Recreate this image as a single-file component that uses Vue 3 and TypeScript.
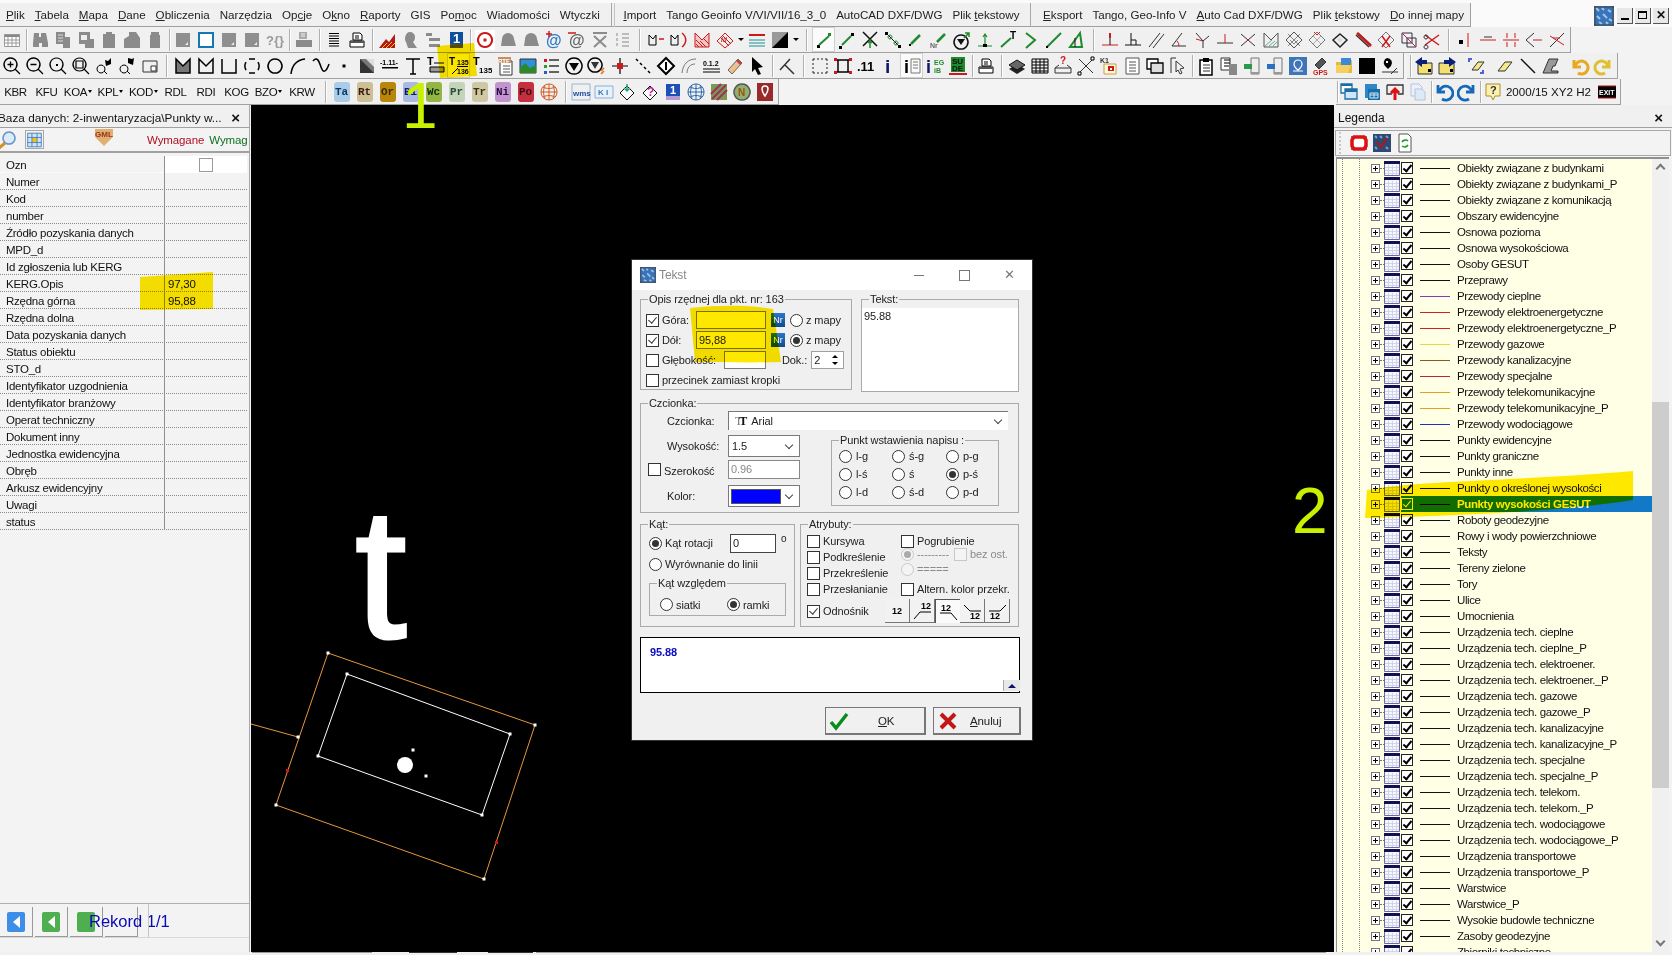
<template>
  <div class="app">
    <div class="menubar">
      <div class="menu">
        <span v-for="m in menuA" :key="m" class="mi">{{ split(m)[0] }}<u>{{ split(m)[1] }}</u>{{ split(m)[2] }}</span>
        <i class="msep"></i>
        <span v-for="m in menuB" :key="m" class="mi">{{ split(m)[0] }}<u>{{ split(m)[1] }}</u>{{ split(m)[2] }}</span>
        <i class="msep short"></i>
        <span v-for="m in menuC" :key="m + 'c'" class="mi">{{ split(m)[0] }}<u>{{ split(m)[1] }}</u>{{ split(m)[2] }}</span>
      </div>
      <div class="winctl">
        <Ico name="mosaic" class="winicon" />
        <span class="wbtn"><i class="w-min"></i></span>
        <span class="wbtn"><i class="w-max"></i></span>
        <span class="wbtn x">✕</span>
      </div>
    </div>

    <div class="tbrow">
      <div class="tb">
        <template v-for="(tok, i) in row2" :key="i">
          <i v-if="isGap(tok)" :class="tok[0] === '_' ? 'gap' : 'sep'" :style="{ width: gapW(tok) + 'px' }"></i>
          <i v-else-if="tok === 'dd'" class="dd"></i>
          <span v-else class="btn" :class="{ pressed: tok.endsWith('!') }"><Ico :name="tok.replace('!', '')" /></span>
        </template>
      </div>
    </div>

    <div class="tbrow">
      <div class="tb">
        <template v-for="(tok, i) in row3a" :key="i">
          <i v-if="isGap(tok)" :class="tok[0] === '_' ? 'gap' : 'sep'" :style="{ width: gapW(tok) + 'px' }"></i>
          <span v-else class="btn" :class="{ pressed: tok.endsWith('!') }"><Ico :name="tok.replace('!', '')" /></span>
        </template>
      </div>
      <div class="tb second">
        <template v-for="(tok, i) in row3b" :key="i">
          <i v-if="isGap(tok)" :class="tok[0] === '_' ? 'gap' : 'sep'" :style="{ width: gapW(tok) + 'px' }"></i>
          <span v-else class="btn"><Ico :name="tok" /></span>
        </template>
      </div>
    </div>

    <div class="tbrow">
      <div class="tb">
        <span v-for="k in keys" :key="k.t" class="key" :style="{ width: k.w + 'px' }">{{ k.t }}<i v-if="k.dd" class="kdd"></i></span>
        <i class="sep" style="width: 11px"></i>
        <span v-for="g in tags" :key="g.t" class="btn"><b class="tag" :style="{ background: g.bg, color: g.fg }">{{ g.t }}</b></span>
        <span class="btn"><Ico name="globeo" /></span>
        <i class="sep" style="width: 9px"></i>
        <span v-for="n in row4a" :key="n" class="btn"><Ico :name="n" /></span>
      </div>
      <div class="tb right4">
        <i class="sep" style="width: 2px"></i>
        <span v-for="n in ['wins', 'winsb', 'upbox', 'copyg']" :key="n" class="btn"><Ico :name="n" /></span>
        <i class="sep" style="width: 3px"></i>
        <span class="btn"><Ico name="undob" /></span>
        <span class="btn"><Ico name="redob" /></span>
        <i class="sep" style="width: 3px"></i>
        <span class="btn"><Ico name="help" /></span>
        <span class="coord">2000/15 XY2 H2</span>
        <span class="btn"><Ico name="exit" /></span>
      </div>
    </div>

    <div class="main">
      <aside class="left">
        <div class="ptitle"><span class="ptext cut">Baza danych: 2-inwentaryzacja\Punkty w...</span><b class="pclose">×</b></div>
        <div class="ltools">
          <Ico name="mag" class="lmag" />
          <span class="gridbtn"><Ico name="gridy" /></span>
          <Ico name="gml" class="lgml" />
          <span class="req red">Wymagane</span>
          <span class="req green">Wymag.</span>
        </div>
        <div class="attrs">
          <div v-for="(r, i) in attrs" :key="r.k" class="arow" :class="{ first: i === 0 }">
            <span class="akey">{{ r.k }}</span>
            <span class="aval"><i v-if="i === 0" class="acheck"></i>{{ r.v }}</span>
          </div>
        </div>
        <div class="recbar">
          <span class="navbtn"><i class="nav blue"><b class="tri-l"></b></i></span>
          <span class="navbtn"><i class="nav grn"><b class="tri-l"></b></i></span>
          <span class="navbtn"><i class="nav grn"></i></span>
          <span class="navbtn last"></span>
          <span class="rec">Rekord 1/1</span>
          <i class="recline"></i>
        </div>
      </aside>

      <section class="canvas">
        <svg class="map" viewBox="251 105 1083 847" width="1083" height="847">
          <text x="355" y="638" class="bigt">t</text>
          <g fill="none" stroke="#e8963c">
            <path d="M251 724L298 737M328 653L535 725L484 879L276 805Z" />
          </g>
          <path d="M347 674L510 734L482 815L318 756Z" fill="none" stroke="#fff" />
          <g fill="#fff">
            <rect v-for="n in nodes" :key="n[0] + '-' + n[1]" :x="n[0] - 1.5" :y="n[1] - 1.5" width="3" height="3" />
            <circle cx="405" cy="765" r="8" />
          </g>
          <g fill="#e01010">
            <rect x="286" y="769" width="3" height="3" />
            <rect x="495" y="841" width="3" height="3" />
          </g>
        </svg>

        <div class="dialog">
          <div class="dtitle">
            <Ico name="mosaic" class="dicon" />
            <span class="dname">Tekst</span>
            <i class="d-min"></i><i class="d-max"></i><span class="d-x">✕</span>
          </div>
          <div class="dbody">
            <div class="dr-top">
              <div class="grp g-opis">
                <span class="cap">Opis rzędnej dla pkt. nr: 163</span>
                <div class="orow">
                  <i class="cb on"></i><span class="olabel">Góra:</span><i class="inp w70"></i><b class="nr">Nr</b><i class="rb"></i><span class="zm">z mapy</span>
                </div>
                <div class="orow">
                  <i class="cb on"></i><span class="olabel">Dół:</span><span class="inp w70">95,88</span><b class="nr">Nr</b><i class="rb on"></i><span class="zm">z mapy</span>
                </div>
                <div class="orow">
                  <i class="cb"></i><span class="olabel wide">Głębokość:</span><i class="inp w42"></i><span class="dok">Dok.:</span>
                  <span class="spin">2<i class="arrows"><b class="sp-up"></b><b class="sp-down"></b></i></span>
                </div>
                <div class="orow">
                  <i class="cb"></i><span class="olabel free">przecinek zamiast kropki</span>
                </div>
              </div>
              <div class="grp g-tekst">
                <span class="cap">Tekst:</span>
                <div class="tekst-val">95.88</div>
              </div>
            </div>

            <div class="grp g-font">
              <span class="cap">Czcionka:</span>
              <div class="frow">
                <span class="flabel">Czcionka:</span>
                <span class="combo full"><span class="ttf">T<b>T</b></span>Arial<i class="chev"></i></span>
              </div>
              <div class="fsplit">
                <div class="fleft">
                  <div class="fline h1">
                    <span class="flabel">Wysokość:</span>
                    <span class="combo sm">1.5<i class="chev"></i></span>
                  </div>
                  <div class="fline h2">
                    <i class="cb szer"></i><span class="flabel short">Szerokość</span>
                    <span class="inp gray w72">0.96</span>
                  </div>
                  <div class="fline h3">
                    <span class="flabel">Kolor:</span>
                    <span class="combo sm kol"><i class="swatch"></i><i class="chev"></i></span>
                  </div>
                </div>
                <div class="grp g-punkt">
                  <span class="cap">Punkt wstawienia napisu :</span>
                  <div class="pgrid">
                    <span v-for="p in points" :key="p" class="pcell"><i class="rb" :class="{ on: p === 'p-ś' }"></i>{{ p }}</span>
                  </div>
                </div>
              </div>
            </div>

            <div class="dr-mid">
              <div class="grp g-kat">
                <span class="cap">Kąt:</span>
                <div class="krow r1"><i class="rb on"></i><span class="klabel">Kąt rotacji</span><i class="inp kinp">0</i><span class="deg">o</span></div>
                <div class="krow r2"><i class="rb"></i><span>Wyrównanie do linii</span></div>
                <div class="grp g-wzgl">
                  <span class="cap">Kąt względem</span>
                  <div class="wrow">
                    <i class="rb"></i><span class="w1">siatki</span><i class="rb on"></i><span>ramki</span>
                  </div>
                </div>
              </div>
              <div class="grp g-atr">
                <span class="cap">Atrybuty:</span>
                <div class="acols">
                  <div class="acol c1">
                    <span class="aitem"><i class="cb"></i>Kursywa</span>
                    <span class="aitem"><i class="cb"></i>Podkreślenie</span>
                    <span class="aitem"><i class="cb"></i>Przekreślenie</span>
                    <span class="aitem"><i class="cb"></i>Przesłanianie</span>
                  </div>
                  <div class="acol c2">
                    <span class="bitem t1"><i class="cb"></i>Pogrubienie</span>
                    <span class="bitem t2 dis"><i class="rb on"></i>---------<i class="cb bez"></i>bez ost.</span>
                    <span class="bitem t3 dis"><i class="rb"></i>=====</span>
                    <span class="bitem t4"><i class="cb"></i>Altern. kolor przekr.</span>
                  </div>
                </div>
                <div class="odn">
                  <span class="aitem"><i class="cb on"></i>Odnośnik</span>
                  <div class="lbtns">
                    <span v-for="(l, i) in leaders" :key="l" class="lbtn" :class="{ sunk: i === 2 }"><Ico :name="l" /></span>
                  </div>
                </div>
              </div>
            </div>

            <div class="preview">
              <b>95.88</b>
              <span class="pvbtn"><i></i></span>
            </div>

            <div class="dbtns">
              <span class="dbtn ok"><Ico name="okcheck" class="bico" /><span class="btxt"><u>O</u>K</span></span>
              <span class="dbtn no"><Ico name="nox" class="bico" /><span class="btxt"><u>A</u>nuluj</span></span>
            </div>
          </div>
        </div>
      </section>

      <aside class="right">
        <div class="ptitle"><span class="ptext">Legenda</span><b class="pclose">×</b></div>
        <div class="rtools">
          <i class="rgrip"></i>
          <Ico name="ring" class="rico" />
          <Ico name="mosaicx" class="rico" />
          <Ico name="docsync" class="rico" />
        </div>
        <div class="rlist">
          <div class="tree">
            <div v-for="l in layers" :key="l.t" class="lrow">
              <i class="plus"></i>
              <i class="conn"></i>
              <Ico name="laytable" class="lt" />
              <div class="lmain" :class="{ sel: l.sel }">
                <i class="lcb"></i>
                <i class="lline" :style="{ background: l.c }"></i>
                <span class="ltext">{{ l.t }}</span>
              </div>
            </div>
          </div>
          <div class="scroll">
            <i class="sc up"></i>
            <div class="track"><i class="thumb"></i></div>
            <i class="sc down"></i>
          </div>
        </div>
      </aside>
    </div>

    <div class="statusbar">
      <i class="st s1"></i><i class="st s2"></i><i class="st s3"></i><i class="st s4"></i>
    </div>

    <svg class="marker" viewBox="0 0 1672 955" width="1672" height="955">
      <g fill="#ffe800">
        <path d="M437 46L474 43L477 76L440 78Z" />
        <path d="M140 277L213 272L213 309L140 310Z" />
        <path d="M690 308C720 305 750 305 773 309L781 362C750 363 720 362 695 362Z" />
        <path d="M1367 490C1420 480 1520 481 1633 471L1633 500C1560 512 1440 516 1365 518Z" />
      </g>
    </svg>
    <span class="note n1">1</span>
    <span class="note n2">2</span>
  </div>
</template>

<script setup lang="ts">
import { h } from 'vue';

interface Shape {
  d?: string;
  stroke?: string;
  fill?: string;
  sw?: number;
  text?: string;
  x?: number;
  y?: number;
  size?: number;
}

const p = (d: string, stroke = '#000', fill = 'none', sw = 1): Shape => ({ d, stroke, fill, sw });
const f = (d: string, fill = '#000'): Shape => ({ d, fill, stroke: 'none' });
const t = (text: string, x: number, y: number, size: number, fill = '#000'): Shape => ({ text, x, y, size, fill });

const G = '#8b8b8b';
const GR = '#1f8a2e';
const R = '#cc1a1a';
const B = '#0f4f9c';

const icons: Record<string, Shape[]> = {
  tbl: [f('M2 4h16v13H2z', '#fff'), f('M2 4h16v3H2z', '#888'), p('M2.5 4.5h15v12h-15zM2.5 10h15M2.5 13h15M6 7v9M10 7v9M14 7v9', '#999')],
  gbin: [f('M4 3h5v4h2V3h5l2 10v4h-6v-4H9v4H3v-4z', G)],
  gdoc: [f('M3 2h9v5h5v11h-7v-4H3z', G), p('M5 5h5M5 8h5M5 11h5', '#ddd')],
  gdoc2: [f('M3 2h11v7h4v9H9v-4H3z', G), f('M5 5h6v5H5z', '#eee')],
  gdrum: [f('M7 2h6v2h3v14H4V4h3z', G)],
  gdrum2: [f('M7 2h7l4 6v10H2V9l5-3z', G)],
  gdrum3: [f('M6 2h8v3h1v13H5V5h1z', G)],
  gsq: [f('M3 3h14v14H3z', '#8f8f8f'), f('M12 15l3-3v3z', '#eee')],
  bsq: [p('M3 3h14v14H3z', '#1578b4', '#fff', 2)],
  qbr: [t('?{}', 1, 15, 13, '#999')],
  gprint: [f('M5 2h8v7H5z', '#aaa'), f('M2 10h16v7H2z', G), p('M7 4h4M7 6h4', '#eee')],
  list: [p('M5 3.5h10M5 6h10M5 8.5h10M5 11h10M5 13.5h10M5 16h10')],
  print: [p('M6 3h7l2 2v5H6z', '#000', '#fff'), p('M3 11h14v6H3zM8 6h4M8 8h4', '#000', '#fff'), f('M3 11h14v2H3z', '#555')],
  redchart: [f('M2 18L9 9l3 3 6-8v14z', '#b51818'), p('M9 18l6-6M13 18l5-5M5 18l5-5', '#f4c81e')],
  gperson: [f('M10 2a5 5 0 0 1 5 5c0 3-1 4-2 5l4 6H8l-2-6c-2-2-1-10 4-10z', G)],
  glist: [f('M3 3h6v3H3zM6 8h11v3H6zM6 14h11v3H6z', G)],
  blue1: [f('M4 2h13v12H4z', B), f('M4 14h13v4H4z', '#555'), t('1', 7, 13, 13, '#fff')],
  target: [f('M0 0h20v20H0z', '#fff'), p('M10 3a7 7 0 1 0 .01 0z', R, 'none', 2), f('M8.5 8.5h3v3h-3z', R)],
  gbell: [f('M10 3a6 6 0 0 1 6 6l2 7H3l1-7a6 6 0 0 1 6-6z', G)],
  atb: [t('@', 2, 16, 16, '#2d78c8'), p('M2 4h6M5 1v6', R, 'none', 1.5)],
  atg: [t('@', 2, 16, 16, '#666'), p('M1 3h8', R, 'none', 1.5)],
  gx: [p('M4 6l12 11M16 6L4 17M3 3h14', G, 'none', 2)],
  glist2: [p('M9 4h7M9 8h7M9 12h7M9 16h7M4 3v3M4 8v3M4 13v3', '#aaa', 'none', 1.5)],
  mdash: [p('M3 15V5l4 4 3-4v10z'), p('M13 9h5', R, 'none', 1.5)],
  marc: [p('M2 15V5l4 4 3-4v10z'), p('M13 3c5 4 5 10 0 14', R, 'none', 1.5)],
  mhatch: [p('M3 17V3l7 7 7-7v14z', R, '#f5c4c4'), p('M4 14l3 3M4 10l7 7M8 11l6 6M12 9l5 5', R)],
  hatchr: [p('M2 11l8-8 8 8-8 7z', R), p('M6 8l8 8M8 6l8 8', R), t('///', 6, 12, 7, '#c22')],
  lines: [f('M2 4h16v2H2z', R), p('M2 10h16M2 13h16', '#1a8f8f', 'none', 1), p('M2 16h16', '#1a8f8f', 'none', 1)],
  bw: [f('M2 2h16v16H2z', '#999'), f('M2 18L18 2v16z', '#000')],
  gl1: [f('M3 15h3v3H3z'), p('M5 15l10-9', GR, 'none', 2), f('M14 3h3v3h-3z', GR)],
  gl2: [f('M2 16h3v3H2zM14 3h3v3h-3z'), p('M5 15l9-9', GR, 'none', 2)],
  xg: [p('M3 2l14 14M17 2L3 16', '#111', 'none', 1.5), p('M10 18v-7M8 13l2-3 2 3', GR, 'none', 1.5)],
  nodes: [p('M3 3l14 14', '#111'), f('M2 2h3v3H2zM15 15h3v3h-3z'), p('M7 5a2 2 0 1 0 .01 0zM13 11a2 2 0 1 0 .01 0z', GR)],
  chk: [p('M5 14l9-9', GR, 'none', 2.5), f('M3 14h2v2H3z')],
  nrchk: [p('M8 12l8-8', GR, 'none', 2.5), t('Nr', 1, 18, 7, '#666')],
  vg: [p('M9 5a7 7 0 1 0 .01 0z', '#111', 'none', 1.5), f('M5 9h8l-4 6z', '#111'), p('M12 8l5-5M13 3h4v4', GR, 'none', 1.5)],
  tup: [p('M3 16h14M10 16V4M8 7l2-3 2 3', GR, 'none', 1.2), f('M8 14h4v3H8z')],
  tline: [p('M3 17l10-9', GR, 'none', 2), t('T', 12, 9, 10)],
  chev: [p('M5 3l9 7-9 8', GR, 'none', 2)],
  slash: [p('M3 17L17 3', GR, 'none', 2), f('M2 16h2v2H2z')],
  triang: [p('M3 17h12L13 3z', GR, 'none', 2), p('M8 17V8', '#111')],
  up1: [p('M2 15h16', R), p('M10 15V5', '#111'), f('M9 3h2v5H9z', R)],
  foot: [p('M2 15h16M8 15V3M8 10h5v5', '#111')],
  para: [p('M3 17L14 3M7 18L18 4', '#333')],
  ang: [p('M3 16h14M3 16L13 3', '#333'), p('M10 16a7 7 0 0 0-2-5', R)],
  yred: [p('M4 3l7 8v7M17 6l-6 5', '#333'), p('M4 9l7 2', R)],
  perp: [p('M2 13h16', '#333'), p('M10 4v9', R)],
  mm: [p('M3 4l14 12M3 16L17 4', '#333'), f('M9 9h2v2H9z', R)],
  box1: [p('M3 3l7 7 7-7v14H3z', '#555'), p('M4 16l7-6M8 16l6-5M12 16l4-4', '#6a9')],
  dia1: [p('M10 2l8 8-8 8-8-8z', '#555'), p('M4 4l12 12M16 4L4 16M6 10l4 4 4-4', '#888')],
  dia2: [p('M10 2l8 8-8 8-8-8z', '#777'), p('M6 6l8 8M14 6l-8 8', '#aaa'), p('M7 2l3 3 3-3', R)],
  dia3: [p('M10 4l7 6-7 7-7-7z', '#222', 'none', 1.5), f('M7 9l3-2 3 3-3 3-3-3z', '#ddd')],
  hatchbar: [p('M3 5l13 12M5 3l13 12', '#333', 'none', 1.5), p('M4 3l14 13', R, 'none', 2.5)],
  dia4: [p('M10 2l8 8-8 8-8-8z', '#777'), p('M6 6l8 11M14 6L6 17', R, 'none', 1.5)],
  sqline: [p('M3 3h10v10H3zM8 8h9v9H8z', '#333'), p('M3 3l14 14', '#c2187a')],
  scissors: [p('M3 5l14 10M3 15L17 5', R, 'none', 1.5), p('M4 5a2 2 0 1 0 .01 0zM4 15a2 2 0 1 0 .01 0z', '#333')],
  dotl: [f('M4 10h4v4H4z'), p('M13 3v14', R)],
  dash: [p('M2 10h16', R), p('M6 7h8', '#333')],
  cc: [p('M2 10h16M6 3v5M6 12v5M14 3v5M14 12v5', R)],
  arrowl: [p('M2 10l8-7M2 10l8 7', '#333'), p('M9 10h9', R)],
  xdash: [p('M3 17L17 3', '#333'), p('M3 6l14 9', R), p('M6 8h7', R)],

  zin: [p('M8.5 2a6.5 6.5 0 1 0 .01 0zM13 13l5 5M5.5 8.5h6M8.5 5.5v6', '#000', 'none', 1.3)],
  zout: [p('M8.5 2a6.5 6.5 0 1 0 .01 0zM13 13l5 5M5.5 8.5h6', '#000', 'none', 1.3)],
  zfit: [p('M8.5 2a6.5 6.5 0 1 0 .01 0zM13 13l5 5', '#000', 'none', 1.2), f('M8 8h2v2H8z')],
  zwin: [p('M8.5 2a6.5 6.5 0 1 0 .01 0zM13 13l5 5M5 5h7v7H5z', '#000', 'none', 1.2)],
  zleft: [p('M7 9a4 4 0 1 0 .01 0zM10 15l3 3', '#000'), f('M17 2l-3 3-3-1 1 6 5-2z')],
  zright: [p('M7 9a4 4 0 1 0 .01 0zM10 15l3 3', '#000'), f('M11 2l4 1 2-1-1 7-5-2z')],
  rectmin: [p('M3 5h14v11H3z', '#333'), p('M11 10h5v5h-5z', '#333', '#fff')],
  mfill: [p('M3 17V3l7 7 7-7v14z', '#000', '#777', 1.5)],
  m: [p('M3 17V3l7 7 7-7v14z', '#000', 'none', 1.5)],
  u: [p('M3 3v14h14V3', '#000', 'none', 1.5)],
  arcd: [p('M4 6a8 8 0 0 0 0 8M16 6a8 8 0 0 1 0 8M7 3h6M7 17h6', '#000', 'none', 1.5)],
  circle: [p('M10 3a7 7 0 1 0 .01 0z', '#000', 'none', 1.5)],
  arc: [p('M3 18C4 9 9 4 17 3', '#000', 'none', 1.5)],
  wave: [p('M2 5c4-5 6 0 8 6s5 6 8-3', '#000', 'none', 1.5)],
  dot: [f('M8.5 8.5h3v3h-3z')],
  grad: [f('M3 3h14v14H3z', '#777'), f('M3 3l14 14H3z', '#333'), f('M9 3h8v8z', '#ddd')],
  n111: [t('-1.11-', 0, 9, 7), f('M2 11h16v1.5H2z')],
  T: [p('M3 3h14M10 3v15M7 18h6', '#000', 'none', 1.5)],
  Tbox: [t('T', 1, 9, 11), p('M8 7h10', '#000'), p('M4 11h14v5H4z', '#000', '#999')],
  T135: [t('T', 0, 9, 10), t('135', 8, 9, 7), p('M3 18l6-6M8 10.5h11', '#000'), t('136', 8, 18, 7)],
  T135b: [t('T', 1, 9, 11), t('135', 7, 17, 8)],
  rtf: [p('M5 5h12v14H5z', '#333', '#fff'), f('M3 1h13v6H3z', '#c89060'), t('RTF', 3, 7, 6, '#fff'), p('M8 10h7M8 13h7M8 16h7', '#555')],
  img: [p('M2 3h16v14H2z', '#333', '#2e90d8'), f('M2 12l5-5 5 5 6-3v8H2z', '#2a8a2a')],
  bullets: [p('M8 4h10M8 10h10M8 16h10', '#333', 'none', 1.5), f('M3 3h3v3H3z', R), f('M3 9h3v3H3z', '#2a9a2a'), f('M3 15h3v3H3z', '#2060c0')],
  tric: [p('M10 2a8 8 0 1 0 .01 0z', '#000', 'none', 1.5), f('M5 7h10l-5 8z')],
  tric2: [p('M8 2a7 7 0 1 0 .01 0z', '#000', 'none', 1.5), f('M4 6h8l-4 7z', '#333'), p('M14 15l3-3M14 18l3-3', '#e07010', 'none', 1.5)],
  crossr: [p('M2 10h16M10 2v16', '#000', 'none', 1.2), f('M7 7h6v6H7z', R)],
  dotline: [p('M3 3l2 2M7 7l2 2M11 11l2 2M15 15l2 2', '#000', 'none', 1.5)],
  diamond: [p('M10 2l8 8-8 8-8-8z', '#000', '#fff', 2), p('M10 6v8', '#000', 'none', 2)],
  arcd2: [p('M3 17C4 8 9 3 17 3M8 17C8 12 11 8 16 8', '#777')],
  n012: [t('0.1.2', 1, 10, 7), p('M1 13h17M1 16h17', '#000')],
  pencil: [f('M3 14L13 3l4 4L7 18z', '#eec08a'), f('M11 5l4 4 2-2-4-4z', '#c84040'), p('M3 14L13 3l4 4L7 18z', '#666')],
  arrow: [f('M4 1l11 10-5 1 3 6-3 1-3-6-3 3z')],
  anglec: [p('M3 14L13 3M8 9l9 9', '#333', 'none', 1.5)],
  dashr: [p('M3 3h2M7 3h2M11 3h2M15 3h2M3 17h2M7 17h2M11 17h2M15 17h2M3 3v2M3 7v2M3 11v2M3 15v2M17 3v2M17 7v2M17 11v2M17 15v2', '#222')],
  redr: [p('M3 4h14M3 16h14M5 4v12M15 4v12', '#000', 'none', 1.5), f('M1 2h3v3H1zM16 2h3v3h-3zM1 15h3v3H1zM16 15h3v3h-3z', R)],
  n11: [t('.11', 1, 15, 13)],
  i: [t('i', 6, 17, 19, '#0a1a66')],
  ilist: [t('i', 2, 17, 18), p('M9 3h9v14H9zM11 6h5M11 9h5M11 12h5', '#777')],
  iegib: [t('i', 1, 17, 18, '#0a1a66'), t('EG', 9, 9, 7, GR), t('iB', 9, 17, 7, GR)],
  sude: [f('M3 1h14v15H3z', '#1f8a2e'), t('SU', 4, 8, 8, '#111'), t('DE', 4, 15, 8, '#111'), f('M1 17h18v2H1z', R)],
  layersg: [f('M2 13l8-5 8 5-8 5z', '#222'), f('M2 9l8-5 8 5-8 5z', '#666'), p('M2 9l8-5 8 5-8 5z', '#111')],
  table: [p('M2 3h16v14H2zM2 6h16M2 9h16M2 12h16M2 15h16M6 3v14M10 3v14M14 3v14', '#000')],
  qbox: [t('?', 7, 8, 10, R), p('M2 12h16v5H2zM2 12l4-3M18 12l-4-3', '#333')],
  xn: [p('M3 3l14 14M17 3L3 17', '#333'), p('M2 16h3v3H2zM15 1h3v3h-3z', '#000', '#fff')],
  k1: [t('K1', 1, 7, 7, '#333'), p('M5 8h12v10H5z', '#c8a040', '#fff9d8'), f('M9 10h6v5H9z', R), f('M11 12h2v2h-2z', '#fff')],
  doc: [p('M4 2h13v16H4zM7 6h7M7 9h7M7 12h7M7 15h7', '#555', '#fff')],
  windows: [p('M2 3h11v10H2z', '#000', '#fff', 1.3), p('M6 7h12v10H6z', '#000', '#ddd', 1.3)],
  cursor: [p('M3 2v15M3 2h5M8 5l8 7-4 1 2 4-2 1-2-4-2 2z', '#333', 'none', 1)],
  clip: [p('M4 4h12v15H4z', '#000', '#fff', 1.5), f('M7 2h6v4H7z'), p('M7 9h7M7 12h7M7 15h7', '#333')],
  docs: [p('M2 2h9v12H2z', '#333', '#fff'), p('M5 4h6M5 7h6M5 10h6', '#000'), f('M10 8h8v11h-8z', '#888')],
  usbg: [p('M9 2h8v16H9z', '#777', '#eee'), f('M2 8h8v5H2z', '#2a9a4a'), f('M9 16h8v2H9z', '#999')],
  usbb: [p('M9 2h8v16H9z', '#777', '#eee'), f('M2 8h8v5H2z', '#2a70c0'), f('M9 16h8v2H9z', '#999')],
  mappin: [f('M1 1h18v18H1z', '#3e74b8'), p('M10 4a4 4 0 0 1 4 4c0 3-4 6-4 6s-4-3-4-6a4 4 0 0 1 4-4zM5 15h10', '#fff', 'none', 1.2)],
  gps: [p('M4 9l7-7 4 4-7 7z', '#333', '#555'), t('GPS', 2, 19, 7, R)],
  folder: [f('M2 6h7l2-2h7v13H2z', '#e8b93a'), f('M7 2h10v7H7z', '#3a8ad8'), f('M2 9h15l-3 8H2z', '#f5d060')],
  black: [f('M2 2h16v16H2z')],
  mark: [f('M7 2a5 5 0 0 1 4 8l-3 3-3-3a5 5 0 0 1 2-8z'), p('M2 16h16M11 18l6-6', '#333'), f('M6 5h2v2H6z', '#fff')],
  sel1: [f('M4 7h14v11H4z', '#f3e070'), p('M4 7h14v11H4z', '#333'), f('M1 6l7-5v3h5v4H8v3z', '#0a1f7a'), f('M14 13h3v3h-3z')],
  sel2: [f('M2 7h15v11H2z', '#f3e070'), p('M2 7h15v11H2z', '#333'), f('M19 6l-7-5v3H7v4h5v3z', '#0a1f7a'), f('M13 13h3v3h-3z')],
  erasb: [f('M6 14L12 6h6l-6 8z', '#f3e98a'), p('M6 14L12 6h6l-6 8z', '#333'), f('M2 2h4v2H4v2H2zM18 18h-4v-2h2v-2h2z', '#5060d8')],
  eras: [f('M3 15L10 6h7l-7 9z', '#f3e98a'), p('M3 15L10 6h7l-7 9z', '#333')],
  bslash: [p('M3 3l14 14', '#111', 'none', 1.5)],
  zsh: [f('M8 3h9l-3 7h-2l-2 5h7v2H2z', '#999'), p('M8 3h9l-3 7h-2l-2 5h7v2H2z', '#333')],
  undoy: [p('M4 4v7h7M5 11a6.5 6.5 0 1 1 3 6', '#e8a820', 'none', 3)],
  redoy: [p('M16 4v7H9M15 11a6.5 6.5 0 1 0-3 6', '#e0c030', 'none', 3)],

  globeo: [p('M10 2a8 8 0 1 0 .01 0zM2 10h16M10 2v16M4 5c4 2 8 2 12 0M4 15c4-2 8-2 12 0M6 4c-2 4-2 8 0 12M14 4c2 4 2 8 0 12', '#d05a20')],
  wms: [p('M1 2h18v16H1z', '#9ab5d5'), t('wms', 2, 14, 8, '#2050a0')],
  ki: [p('M1 4h18v12H1z', '#8ab0d8', '#e8f2fb'), t('K I', 4, 13, 8, '#3a78c0')],
  dia5: [p('M10 4l7 7-7 7-7-7z', '#111', '#fff'), p('M10 2v7M7 6l3 3 3-3', '#2aa070', 'none', 1.5)],
  qdia: [p('M10 4l7 7-7 7-7-7z', '#111', '#fff'), t('?', 7, 14, 12, '#c02090')],
  b1: [f('M3 2h14v12H3z', '#1c50b8'), t('1', 7, 12, 11, '#fff'), f('M3 14h14v4H3z', '#b79ad0')],
  globeb: [p('M10 2a8 8 0 1 0 .01 0zM2 10h16M10 2v16M4 5c4 2 8 2 12 0M4 15c4-2 8-2 12 0M6 4c-2 4-2 8 0 12M14 4c2 4 2 8 0 12', '#2c68a8')],
  hmap: [f('M2 2h16v16H2z', '#7a9a50'), p('M3 17L17 3M8 18L18 8M2 12L12 2', '#a03060', 'none', 2)],
  nmap: [p('M10 2a8 8 0 1 0 .01 0z', '#555', '#90b070', 1.5), t('N', 6, 14, 10, '#a05010')],
  pin: [f('M2 1h16v18H2z', '#9a2a2a'), p('M10 4a3 3 0 0 1 3 3c0 3-3 7-3 7s-3-4-3-7a3 3 0 0 1 3-3z', '#fff', 'none', 1.5)],
  wins: [p('M2 2h11v9H2z', '#1a6ea8', '#fff', 1.3), f('M2 2h11v2H2z', '#1a6ea8'), p('M6 7h12v10H6z', '#1a6ea8', '#cfe6f8', 1.3), f('M6 7h12v3H6z', '#1a6ea8')],
  winsb: [f('M3 2h12v14H3z', '#2f86c8'), f('M6 7h12v11H6z', '#1a6ea8'), p('M8 11h8v5H8zM8 13h8M12 11v5', '#cfe6f8')],
  upbox: [p('M2 3h16v9h-5M7 12H2V3', '#333', 'none', 1.3), p('M10 18V7M6 11l4-4 4 4', '#e01010', 'none', 3)],
  copyg: [p('M3 2h8l3 3v9H3z', '#b4c4dc', '#eef'), p('M7 7h7l3 3v8H7z', '#b4c4dc', '#dfe8f5')],
  undob: [p('M4 3v7h7M5 10a7 7 0 1 1 3 7', '#1668b8', 'none', 2.8)],
  redob: [p('M16 3v7H9M15 10a7 7 0 1 0-3 7', '#1668b8', 'none', 2.8)],
  help: [p('M3 2h14v12h-5l-2 4-2-4H3z', '#a89030', '#fbf0b0'), t('?', 7, 12, 11, '#333')],
  exit: [f('M1 4h18v12H1z'), t('EXIT', 2, 13, 7, '#fff'), p('M1 4h18M1 16h18', '#c01010', 'none', 1.2)],

  mosaic: [f('M0 0h20v20H0z', '#3a74b8'), p('M2 2l3 3M8 2l2 2M14 4l3 2M3 10l3 3M9 8l4 4M15 13l3 2M5 16l3 2M12 16l2 2', '#9dc3ea', 'none', 2), p('M0 1h20M0 19h20M1 0v20M19 0v20', '#444', 'none', 1)],
  mosaicx: [f('M1 1h18v18H1z', '#2d4a74'), p('M3 3l2 2M8 3l2 2M14 3l2 2M3 14l2 2M14 14l2 2', '#7da0c8', 'none', 2), p('M5 9l4 5 6-9', '#b01818', 'none', 2)],
  ring: [f('M2 3h16v14H2z', '#777'), p('M5 4h10l2 3v6l-2 3H5l-2-3V7z', '#e01010', '#fff', 3.5)],
  docsync: [p('M4 1h9l3 3v15H4z', '#555', '#fff'), p('M7 9a4 4 0 0 1 6-1M13 12a4 4 0 0 1-6 1', '#1a9a2a', 'none', 1.6)],
  mag: [p('M12 2a6 6 0 1 0 .01 0z', '#6a95c8', '#dceafa', 1.5), p('M8 13l-7 6', '#d09030', 'none', 3)],
  gridy: [f('M2 2h16v16H2z', '#cfe4f8'), f('M7 7h6v6H7z', '#f4c020'), p('M2 7h16M2 13h16M7 2v16M13 2v16M2 2h16v16H2z', '#3a78b8')],
  gml: [f('M1 1h18v8l-9 9-9-9z', '#e0b070'), t('GML', 1, 9, 8, '#a03020')],
  laytable: [f('M0 0h16v15H0z', '#f6f6ff'), p('M0 6.5h16M0 9.5h16M0 12.5h16M4.5 4v11M8.5 4v11M12.5 4v11', '#d4d4e8'), p('M.5 3v11.5h15V3', '#6a6a9c'), f('M0 0h16v3H0z', '#0e0e5a')],
  okcheck: [p('M2 11l5 6L18 3', '#0c8a1c', 'none', 3.5)],
  nox: [p('M3 3l14 14M17 3L3 17', '#c01818', 'none', 4)],

  l12a: [t('12', 5, 13, 9)],
  l12b: [t('12', 9, 8, 9), p('M2 18l6-7h11', '#000')],
  l12c: [t('12', 3, 9, 9), p('M2 11h11l6 7', '#000')],
  l12d: [t('12', 8, 18, 9), p('M2 4l6 6h11', '#000')],
  l12e: [t('12', 3, 18, 9), p('M19 4l-6 6H2', '#000')],
};

const Ico = (props: { name: string }) =>
  h(
    'svg',
    { viewBox: props.name === 'laytable' ? '0 0 16 15' : '0 0 20 20', width: 20, height: 20, style: 'display:block' },
    (icons[props.name] || []).map((s) =>
      s.text
        ? h('text', { x: s.x, y: s.y, fill: s.fill, 'font-size': s.size, 'font-family': 'Liberation Sans, sans-serif', 'font-weight': 700 }, s.text)
        : h('path', { d: s.d, stroke: s.stroke, fill: s.fill, 'stroke-width': s.sw ?? 1 })
    )
  );

// "&" marks the accelerator letter of a menu entry
const menuA = ['&Plik', '&Tabela', '&Mapa', '&Dane', '&Obliczenia', 'Narzędzia', 'Op&cje', 'O&kno', '&Raporty', 'GIS', 'Po&moc', 'Wiadomości', 'Wtyczki'];
const menuB = ['&Import', 'Tango Geoinfo V/VI/VII/16_3_0', 'AutoCAD DXF/DWG', 'Plik &tekstowy'];
const menuC = ['&Eksport', 'Tango, Geo-Info V', '&Auto Cad DXF/DWG', 'Plik &tekstowy', '&Do innej mapy'];

const split = (m: string) => {
  const i = m.indexOf('&');
  return i < 0 ? [m, '', ''] : [m.slice(0, i), m[i + 1], m.slice(i + 2)];
};

const row2 = [
  'tbl', '|5', 'gbin', 'gdoc', 'gdoc2', 'gdrum', 'gdrum2', 'gdrum3', '|5',
  'gsq', 'bsq', 'gsq', 'gsq', 'qbr', '|6', 'gprint', '|7', 'list', 'print', '|7',
  'redchart', 'gperson', 'glist', 'blue1', '|6', 'target', 'gbell', 'gbell', 'atb', 'atg', 'gx', 'glist2', '|10',
  'mdash', 'marc', 'mhatch', 'hatchr', 'dd', 'lines', 'bw', 'dd', '|12',
  'gl1!', 'gl2', 'xg', 'nodes', 'chk', 'nrchk', 'vg', 'tup', 'tline', 'chev', 'slash', 'triang', '|10',
  'up1', 'foot', 'para', 'ang', 'yred', 'perp', 'mm', 'box1', 'dia1', 'dia2', 'dia3', 'hatchbar', 'dia4', 'sqline', 'scissors', '|10',
  'dotl', 'dash', 'cc', 'arrowl', 'xdash',
];
const row3a = [
  'zin', 'zout', 'zfit', 'zwin', 'zleft', 'zright', 'rectmin', '|10',
  'mfill', 'm', 'u', 'arcd', 'circle', 'arc', 'wave', 'dot', 'grad', 'n111', 'T', 'Tbox', 'T135!', 'T135b', 'rtf', 'img', 'bullets', 'tric', 'tric2', 'crossr', 'dotline', 'diamond', 'arcd2', 'n012', 'pencil', 'arrow', '|6',
  'anglec', '|10', 'dashr', 'redr', 'n11', 'i', 'ilist!', 'iegib', 'sude', '|5', 'print', '|8',
  'layersg', 'table', 'qbox', 'xn', 'k1', 'doc', 'windows', 'cursor', '|5',
  'clip', 'docs', 'usbg', 'usbb', 'mappin', 'gps', 'folder', 'black', 'mark',
];
const row3b = ['|5', 'sel1', 'sel2', '_6', 'erasb', '_6', 'eras', 'bslash', 'zsh', '_6', 'undoy', 'redoy'];
const row4a = ['wms', 'ki', 'dia5', 'qdia', 'b1', 'globeb', 'hmap', 'nmap', 'pin'];

const isGap = (tok: string) => tok[0] === '|' || tok[0] === '_';
const gapW = (tok: string) => Number(tok.slice(1));

const keys = [
  { t: 'KBR', w: 31 }, { t: 'KFU', w: 31 }, { t: 'KOA', w: 32, dd: true }, { t: 'KPL', w: 33, dd: true }, { t: 'KOD', w: 33, dd: true },
  { t: 'RDL', w: 31 }, { t: 'RDI', w: 30 }, { t: 'KOG', w: 31 }, { t: 'BZO', w: 33, dd: true }, { t: 'KRW', w: 34 },
];
const tags = [
  { t: 'Ta', bg: '#a9cde8', fg: '#0c3a66' }, { t: 'Rt', bg: '#cdbf95', fg: '#3a1a10' }, { t: 'Or', bg: '#b8860b', fg: '#3a2a00' },
  { t: 'Bi', bg: '#aab8e4', fg: '#101a60' }, { t: 'Wc', bg: '#93b544', fg: '#0f2c08' }, { t: 'Pr', bg: '#c4d4b8', fg: '#2a4a3a' },
  { t: 'Tr', bg: '#cfc8a4', fg: '#3a3010' }, { t: 'Ni', bg: '#c294cc', fg: '#2a0a4a' }, { t: 'Po', bg: '#c43040', fg: '#400a10' },
];

const attrs = [
  { k: 'Ozn', v: '' }, { k: 'Numer', v: '' }, { k: 'Kod', v: '' }, { k: 'number', v: '' }, { k: 'Źródło pozyskania danych', v: '' },
  { k: 'MPD_d', v: '' }, { k: 'Id zgłoszenia lub KERG', v: '' }, { k: 'KERG.Opis', v: '97,30' }, { k: 'Rzędna górna', v: '95,88' },
  { k: 'Rzędna dolna', v: '' }, { k: 'Data pozyskania danych', v: '' }, { k: 'Status obiektu', v: '' }, { k: 'STO_d', v: '' },
  { k: 'Identyfikator uzgodnienia', v: '' }, { k: 'Identyfikator branżowy', v: '' }, { k: 'Operat techniczny', v: '' },
  { k: 'Dokument inny', v: '' }, { k: 'Jednostka ewidencyjna', v: '' }, { k: 'Obręb', v: '' }, { k: 'Arkusz ewidencyjny', v: '' },
  { k: 'Uwagi', v: '' }, { k: 'status', v: '' },
];

const nodes = [[328, 653], [535, 725], [484, 879], [276, 805], [298, 737], [347, 674], [510, 734], [482, 815], [318, 756], [413, 750], [426, 776]];
const points = ['l-g', 'ś-g', 'p-g', 'l-ś', 'ś', 'p-ś', 'l-d', 'ś-d', 'p-d'];
const leaders = ['l12a', 'l12b', 'l12c', 'l12d', 'l12e'];

const legendColors: Record<string, string> = {
  'Przewody cieplne': '#8a3ab8',
  'Przewody elektroenergetyczne': '#d02020',
  'Przewody elektroenergetyczne_P': '#d02020',
  'Przewody gazowe': '#e4d840',
  'Przewody kanalizacyjne': '#8a5a20',
  'Przewody specjalne': '#c02040',
  'Przewody telekomunikacyjne': '#e0a020',
  'Przewody telekomunikacyjne_P': '#e0a020',
  'Przewody wodociągowe': '#2030c0',
};

const names = [
  'Obiekty związane z budynkami', 'Obiekty związane z budynkami_P', 'Obiekty związane z komunikacją', 'Obszary ewidencyjne', 'Osnowa pozioma',
  'Osnowa wysokościowa', 'Osoby GESUT', 'Przeprawy', 'Przewody cieplne', 'Przewody elektroenergetyczne', 'Przewody elektroenergetyczne_P',
  'Przewody gazowe', 'Przewody kanalizacyjne', 'Przewody specjalne', 'Przewody telekomunikacyjne', 'Przewody telekomunikacyjne_P',
  'Przewody wodociągowe', 'Punkty ewidencyjne', 'Punkty graniczne', 'Punkty inne', 'Punkty o określonej wysokości', 'Punkty wysokości GESUT',
  'Roboty geodezyjne', 'Rowy i wody powierzchniowe', 'Teksty', 'Tereny zielone', 'Tory', 'Ulice', 'Umocnienia',
  'Urządzenia tech. cieplne', 'Urządzenia tech. cieplne_P', 'Urządzenia tech. elektroener.', 'Urządzenia tech. elektroener._P',
  'Urządzenia tech. gazowe', 'Urządzenia tech. gazowe_P', 'Urządzenia tech. kanalizacyjne', 'Urządzenia tech. kanalizacyjne_P',
  'Urządzenia tech. specjalne', 'Urządzenia tech. specjalne_P', 'Urządzenia tech. telekom.', 'Urządzenia tech. telekom._P',
  'Urządzenia tech. wodociągowe', 'Urządzenia tech. wodociągowe_P', 'Urządzenia transportowe', 'Urządzenia transportowe_P',
  'Warstwice', 'Warstwice_P', 'Wysokie budowle techniczne', 'Zasoby geodezyjne', 'Zbiorniki techniczne',
];

const layers = names.map((n) => ({ t: n, c: legendColors[n] || '#111', sel: n === 'Punkty wysokości GESUT' }));
</script>

<style>
html, body { margin: 0; background: #f0f0f0; overflow: hidden; }
</style>

<style scoped>
i { font-style: normal; display: block; }
.app {
  position: relative;
  width: 1672px;
  height: 955px;
  overflow: hidden;
  background: #f3f3f3;
  font-family: "Liberation Sans", Arial, sans-serif;
  font-size: 11.5px;
  color: #111;
}

/* menu */
.menubar { display: flex; justify-content: space-between; height: 27px; box-sizing: border-box; padding-top: 3px; background: #fafafa; }
.menu { display: flex; align-items: center; gap: 10px; padding-left: 6px; padding-right: 6px; width: 1471px; box-sizing: border-box; background: #f0f0f0; border-right: 1px solid #a0a0a0; border-bottom: 1px solid #a0a0a0; color: #222; font-size: 11.6px; }
.mi { white-space: nowrap; }
.msep { width: 1px; height: 24px; background: #a8a8a8; margin: 0 2px 0 1px; box-shadow: 3px 0 0 #c4c4c4; }
.msep.short { box-shadow: none; height: 24px; }
.winctl { display: flex; align-items: center; gap: 2px; padding-right: 3px; padding-top: 1px; }
.winicon { margin-right: 1px; }
.wbtn { width: 16px; height: 16px; background: #e8e8e8; border-right: 1px solid #555; border-bottom: 1px solid #555; box-sizing: border-box; display: flex; align-items: center; justify-content: center; font-size: 12px; font-weight: 700; line-height: 1; }
.w-min { width: 8px; height: 2px; background: #000; margin-top: 8px; }
.w-max { width: 9px; height: 8px; border: 1px solid #000; border-top-width: 2px; box-sizing: border-box; }

/* toolbars */
.tbrow { display: flex; height: 26px; }
.tb { display: flex; align-items: center; height: 25px; background: #f0f0f0; border-right: 1px solid #a0a0a0; border-bottom: 1px solid #a0a0a0; padding-right: 2px; }
.tb.second { margin-left: 3px; padding-right: 3px; }
.tb.right4 { margin-left: auto; margin-right: 51px; }
.btn { width: 23px; height: 25px; flex: none; display: flex; align-items: center; justify-content: center; box-sizing: border-box; }
.btn.pressed { background: #fbfbfb; border: 1px solid #d0d0d0; }
.sep { height: 22px; flex: none; position: relative; }
.sep::after { content: ""; position: absolute; left: 50%; top: 0; bottom: 0; width: 1px; background: #b0b0b0; box-shadow: 1px 0 0 #fff; }
.gap { height: 1px; flex: none; }
.dd { width: 0; height: 0; flex: none; border-left: 3px solid transparent; border-right: 3px solid transparent; border-top: 3px solid #000; margin: 0 1.5px; }
.key { flex: none; display: flex; align-items: center; justify-content: center; height: 25px; font-size: 11.5px; letter-spacing: -0.3px; color: #111; }
.kdd { width: 0; height: 0; border-left: 2.5px solid transparent; border-right: 2.5px solid transparent; border-top: 3px solid #000; margin-left: 1px; }
.tag { display: block; width: 16px; height: 20px; line-height: 20px; text-align: center; border-radius: 3px; font-family: "Liberation Mono", monospace; font-size: 11px; }
.coord { font-size: 11.6px; white-space: nowrap; margin: 0 4px 0 1px; color: #111; }

/* main columns */
.main { display: flex; height: 847px; }
.left { width: 250px; flex: none; display: flex; flex-direction: column; margin-right: 1px; border-right: 1px solid #a8a8a8; box-sizing: border-box; }
.ptitle { height: 23px; flex: none; display: flex; align-items: center; justify-content: space-between; padding: 3px 9px 0 4px; font-size: 12px; color: #111; border-bottom: 1px solid #a0a0a0; background: #f0f0f0; box-sizing: border-box; }
.ptext { white-space: nowrap; }
.ptext.cut { margin-left: -6px; font-size: 11.8px; }
.pclose { font-size: 15px; font-weight: 700; line-height: 1; }
.ltools { height: 25px; flex: none; display: flex; align-items: center; position: relative; border-bottom: 2px solid #a0a0a0; box-sizing: border-box; padding-left: 0; }
.lmag { margin-left: -3px; }
.gridbtn { width: 17px; height: 17px; border: 1px solid #a8a8a8; margin-left: 8px; display: flex; align-items: center; justify-content: center; overflow: hidden; }
.lgml { margin-left: 50px; margin-top: -3px; }
.req { white-space: nowrap; font-size: 11.5px; letter-spacing: -0.1px; }
.req.red { color: #b01020; margin-left: 33px; }
.req.green { color: #107020; margin-left: 5px; width: 39px; overflow: hidden; }

.attrs { width: 247px; padding-top: 3px; flex: none; letter-spacing: -0.25px; }
.arow { display: flex; height: 17px; box-sizing: border-box; border-bottom: 1px dotted #8a8a8a; align-items: center; }
.arow.first { border-bottom-color: #fff; }
.akey { width: 165px; padding-left: 6px; box-sizing: border-box; border-right: 1px solid #8f8f8f; height: 17px; line-height: 18px; white-space: nowrap; flex: none; }
.aval { flex: 1; padding-left: 3px; height: 16px; line-height: 18px; color: #111; }
.arow.first .aval { background: #fff; height: 17px; position: relative; }
.acheck { width: 12px; height: 12px; border: 1px solid #999; background: #fff; position: absolute; left: 34px; top: 2px; }

.recbar { margin-top: auto; margin-bottom: 14px; height: 35px; padding-top: 3px; box-sizing: border-box; display: flex; align-items: center; position: relative; border-top: 1px solid #b0b0b0; border-bottom: 1px solid #d8d8d8; gap: 2px; flex: none; }
.navbtn { width: 33px; height: 30px; box-sizing: border-box; border-right: 1px solid #999; border-bottom: 1px solid #999; display: flex; align-items: center; justify-content: center; flex: none; }
.nav { width: 18px; height: 20px; border-radius: 2px; display: flex; align-items: center; justify-content: center; }
.nav.blue { background: #3d8ee8; }
.nav.grn { background: #4fae4f; }
.tri-l { width: 0; height: 0; border-top: 6px solid transparent; border-bottom: 6px solid transparent; border-right: 7px solid #fff; }
.rec { position: absolute; left: 89px; top: 8px; font-size: 16.5px; color: #0a0ab4; white-space: nowrap; }
.recline { position: absolute; left: 148px; top: 0; bottom: 0; width: 1px; background: #c4c4c4; }

/* canvas */
.canvas { width: 1083px; flex: none; height: 847px; background: #000; position: relative; overflow: hidden; }
.map { position: absolute; left: 0; top: 0; }
.bigt { fill: #fff; stroke: #fff; stroke-width: 3px; font-family: "Liberation Sans", sans-serif; font-size: 186px; }

/* dialog */
.dialog { position: absolute; left: 380px; top: 154px; width: 402px; height: 482px; box-sizing: border-box; background: #f0f0f0; border: 1px solid #333; color: #222; font-size: 11px; letter-spacing: -0.1px; }
.dtitle { height: 30px; background: #fff; display: flex; align-items: center; position: relative; }
.dicon { margin-left: 6px; transform: scale(0.8); }
.dname { margin-left: 1px; color: #888; font-size: 12px; }
.d-min { position: absolute; left: 282px; top: 15px; width: 10px; height: 1px; background: #777; }
.d-max { position: absolute; left: 327px; top: 10px; width: 9px; height: 9px; border: 1px solid #777; }
.d-x { position: absolute; left: 372px; top: 8px; font-size: 13px; color: #777; line-height: 1; }
.dbody { padding: 9px 12px 0 8px; }
.grp { position: relative; border: 1px solid #aaa; box-sizing: border-box; }
.cap { position: absolute; left: 7px; top: -7px; background: #f0f0f0; padding: 0 1px; line-height: 13px; white-space: nowrap; color: #222; }
.dr-top { display: flex; gap: 9px; }
.g-opis { width: 212px; height: 91px; padding-top: 10px; }
.g-tekst { width: 158px; height: 93px; padding-top: 8px; background: #f0f0f0; }
.tekst-val { background: #fff; height: 83px; padding: 2px 2px; box-sizing: border-box; font-size: 11px; }
.orow { display: flex; align-items: center; height: 20px; padding-left: 5px; }
.cb { width: 13px; height: 13px; box-sizing: border-box; border: 1px solid #333; background: #fff; flex: none; position: relative; }
.cb.on::after { content: ""; position: absolute; left: 2.5px; top: 0.5px; width: 4px; height: 7px; border: solid #333; border-width: 0 1.3px 1.3px 0; transform: rotate(40deg); }
.rb { width: 13px; height: 13px; box-sizing: border-box; border: 1px solid #333; border-radius: 50%; background: #fff; flex: none; position: relative; }
.rb.on::after { content: ""; position: absolute; left: 2px; top: 2px; width: 7px; height: 7px; border-radius: 50%; background: #333; }
.olabel { width: 34px; margin-left: 3px; flex: none; white-space: nowrap; }
.olabel.wide { width: 62px; }
.olabel.free { width: auto; }
.inp { height: 18px; line-height: 17px; box-sizing: border-box; border: 1px solid #7a7a7a; background: #fff; padding: 0 2px; flex: none; display: block; font-style: normal; }
.w70 { width: 70px; }
.w42 { width: 42px; }
.w72 { width: 72px; }
.inp.gray { color: #888; height: 19px; border-color: #888; }
.nr { width: 14px; height: 14px; margin-left: 5px; flex: none; background: linear-gradient(#2a78c8, #0f4a90); color: #fff; font-size: 9px; font-weight: 400; line-height: 14px; text-align: center; letter-spacing: 0; }
.orow .rb { margin-left: 5px; }
.zm { margin-left: 3px; white-space: nowrap; }
.dok { margin-left: 16px; }
.spin { margin-left: 4px; width: 33px; height: 18px; box-sizing: border-box; background: #fff; border: 1px solid #a0a0a0; padding-left: 2px; line-height: 16px; position: relative; }
.arrows { position: absolute; right: 0; top: 0; bottom: 0; width: 15px; }
.sp-up, .sp-down { position: absolute; left: 4px; width: 0; height: 0; border-left: 3px solid transparent; border-right: 3px solid transparent; }
.sp-up { top: 3px; border-bottom: 3px solid #000; }
.sp-down { bottom: 3px; border-top: 3px solid #000; }

.g-font { margin-top: 11px; width: 379px; height: 110px; padding-top: 7px; }
.frow { display: flex; align-items: center; height: 19px; }
.frow .flabel, .fline .flabel { padding-left: 26px; box-sizing: border-box; width: 87px; flex: none; white-space: nowrap; }
.fline .flabel.short { width: 67px; padding-left: 3px; padding-top: 3px; }
.combo { position: relative; background: #fff; box-sizing: border-box; display: flex; align-items: center; }
.combo.full { width: 280px; height: 19px; border-top: 1px solid #777; border-left: 1px solid #777; padding-left: 6px; }
.combo.sm { width: 72px; height: 22px; border: 1px solid #7a7a7a; padding-left: 3px; }
.chev { position: absolute; right: 7px; top: 50%; margin-top: -4px; width: 5px; height: 5px; border: solid #444; border-width: 0 1px 1px 0; transform: rotate(45deg); }
.ttf { font-family: "Liberation Serif", serif; font-size: 12px; color: #777; margin-right: 4px; letter-spacing: -3px; padding-right: 3px; }
.ttf b { color: #111; }
.swatch { width: 50px; height: 15px; background: #0000ff; border: 1px solid #555; box-sizing: border-box; margin-left: -1px; }
.fsplit { display: flex; margin-top: 5px; }
.fleft { width: 190px; flex: none; }
.fline { display: flex; align-items: center; }
.fline.h1 { height: 22px; }
.fline.h2 { height: 19px; margin-top: 3px; padding-left: 7px; }
.fline.h3 { height: 22px; margin-top: 6px; }
.g-punkt { width: 168px; height: 66px; margin-top: 5px; }
.pgrid { display: grid; grid-template-columns: 53px 54px 50px; grid-auto-rows: 18px; padding: 6px 0 0 7px; }
.pcell { display: flex; align-items: center; gap: 4px; font-size: 11px; }

.dr-mid { display: flex; gap: 5px; margin-top: 11px; }
.g-kat { width: 155px; height: 103px; padding: 0; }
.g-atr { width: 219px; height: 103px; }
.krow { display: flex; align-items: center; padding-left: 8px; gap: 3px; }
.krow.r1 { height: 20px; margin-top: 8px; }
.krow.r2 { height: 20px; margin-top: 1px; }
.klabel { width: 62px; }
.kinp { width: 46px; height: 19px; border-color: #444; }
.deg { margin-left: 2px; margin-top: -10px; font-size: 10px; }
.g-wzgl { width: 137px; height: 33px; margin: 9px 0 0 8px; }
.wrow { display: flex; align-items: center; padding: 14px 0 0 10px; gap: 3px; }
.w1 { width: 48px; }
.acols { display: flex; padding: 8px 0 0 6px; }
.acol { position: relative; height: 65px; }
.acol.c1 { width: 94px; display: grid; grid-auto-rows: 16px; }
.acol.c2 { flex: 1; }
.aitem { display: flex; align-items: center; gap: 3px; white-space: nowrap; }
.bitem { position: absolute; left: 0; display: flex; align-items: center; gap: 3px; white-space: nowrap; height: 14px; }
.t1 { top: 1px; }
.t2 { top: 14px; }
.t3 { top: 29px; }
.t4 { top: 49px; }
.dis { color: #8a8a8a; }
.dis .rb, .dis .cb { border-color: #c8c8c8; background: #f4f4f4; }
.dis .rb.on::after { background: #aaa; }
.bez { margin-left: 2px; }
.odn { display: flex; align-items: center; justify-content: space-between; padding: 0 8px 0 6px; margin-top: 1px; }
.lbtns { display: flex; }
.lbtn { width: 25px; height: 24px; background: #f2f2f2; border-right: 1px solid #777; border-bottom: 1px solid #777; box-sizing: border-box; display: flex; align-items: center; justify-content: center; }
.lbtn.sunk { background: #fafafa; border: 0; border-top: 1px solid #555; border-left: 1px solid #555; }

.preview { position: relative; margin-top: 10px; width: 380px; height: 56px; box-sizing: border-box; background: #fff; border: 1px solid #000; padding: 8px 9px; color: #0a0ac8; font-size: 11px; }
.pvbtn { position: absolute; right: -1px; bottom: 1px; width: 16px; height: 11px; background: #e8e8e8; border-left: 1px solid #aaa; display: flex; align-items: center; justify-content: center; }
.pvbtn i { width: 0; height: 0; border-left: 4px solid transparent; border-right: 4px solid transparent; border-bottom: 4px solid #10106a; }
.dbtns { display: flex; justify-content: flex-end; gap: 7px; margin-top: 14px; }
.dbtn { display: flex; align-items: center; height: 28px; box-sizing: border-box; border: 1px solid #777; border-right-width: 2px; border-bottom-width: 2px; position: relative; background: #f0f0f0; }
.dbtn.ok { width: 101px; }
.dbtn.no { width: 88px; margin-right: -1px; }
.bico { position: absolute; left: 3px; top: 3px; }
.no .bico { left: 4px; }
.btxt { position: absolute; font-size: 11.5px; }
.ok .btxt { left: 52px; }
.no .btxt { left: 36px; }

/* legend */
.right { flex: 1; min-width: 0; display: flex; flex-direction: column; margin-left: 0; }
.rtools { height: 26px; margin: 2px 0 0 1px; flex: none; border: 1px solid #a8a8a8; box-sizing: border-box; display: flex; align-items: center; width: 336px; gap: 3px; }
.rgrip { width: 5px; height: 22px; margin-left: 3px; border-left: 2px dotted #c8c8c8; margin-right: 0; }
.rico { flex: none; }
.rlist { flex: 1; margin: 1px 0 0 2px; display: flex; width: 333px; min-height: 0; overflow: hidden; border-top: 2px solid #909090; border-left: 1px solid #909090; box-sizing: border-box; }
.tree {
  flex: 1;
  min-width: 0;
  background-color: #ffffe6;
  background-image: repeating-linear-gradient(#888 0 1px, transparent 1px 2px), repeating-linear-gradient(#888 0 1px, transparent 1px 2px);
  background-size: 1px 100%, 1px 100%;
  background-position: 5px 0, 22px 0;
  background-repeat: no-repeat;
  padding-top: 1px;
  overflow: hidden;
  letter-spacing: -0.4px;
}
.lrow { display: flex; align-items: center; height: 16px; padding-left: 34px; }
.plus { width: 9px; height: 9px; flex: none; box-sizing: border-box; border: 1px solid #777; background: linear-gradient(#000, #000) center / 5px 1px no-repeat, linear-gradient(#000, #000) center / 1px 5px no-repeat, #fff; }
.conn { width: 4px; border-top: 1px dotted #777; flex: none; }
.lt { flex: none; margin-right: 1px; width: 16px; height: 15px; }
.lmain { flex: 1; display: flex; align-items: center; height: 16px; min-width: 0; }
.lmain.sel { background: #1278c8; color: #fff; font-weight: 700; }
.lcb { width: 12px; height: 12px; box-sizing: border-box; border: 1px solid #222; background: #fff; position: relative; flex: none; }
.lcb::after { content: ""; position: absolute; left: 3px; top: 0; width: 3px; height: 7px; border: solid #000; border-width: 0 2px 2px 0; transform: rotate(40deg); }
.sel .lcb { background: transparent; border-color: #fff; }
.sel .lcb::after { border-color: #fff; border-width: 0 1.2px 1.2px 0; }
.lline { width: 30px; height: 1px; margin: 0 7px; flex: none; }
.sel .lline { background: #000 !important; }
.ltext { white-space: nowrap; color: inherit; }
.scroll { width: 17px; flex: none; display: flex; flex-direction: column; background: #f0f0f0; }
.sc { height: 17px; flex: none; position: relative; }
.sc::after { content: ""; position: absolute; left: 5px; width: 5px; height: 5px; border: solid #777; border-width: 2px 0 0 2px; }
.sc.up::after { top: 6px; transform: rotate(45deg); }
.sc.down::after { top: 3px; transform: rotate(225deg); }
.track { flex: 1; position: relative; }
.thumb { position: absolute; left: 0; right: 0; top: 226px; height: 386px; background: #cdcdcd; }

.statusbar { height: 3px; display: flex; background: #f0f0f0; position: relative; }
.st { height: 1px; background: #999; position: absolute; top: 0; }
.s1 { left: 252px; width: 120px; }
.s2 { left: 409px; width: 48px; background: #333; }
.s3 { left: 488px; width: 45px; background: #333; }
.s4 { left: 536px; width: 790px; }

/* markers drawn over the screenshot */
.marker { position: absolute; left: 0; top: 0; mix-blend-mode: multiply; pointer-events: none; }
.note { position: absolute; color: #c8f000; font-size: 64px; line-height: 1; font-family: "Liberation Sans", sans-serif; }
.n1 { left: 402px; top: 74px; }
.n2 { left: 1292px; top: 479px; }
</style>
